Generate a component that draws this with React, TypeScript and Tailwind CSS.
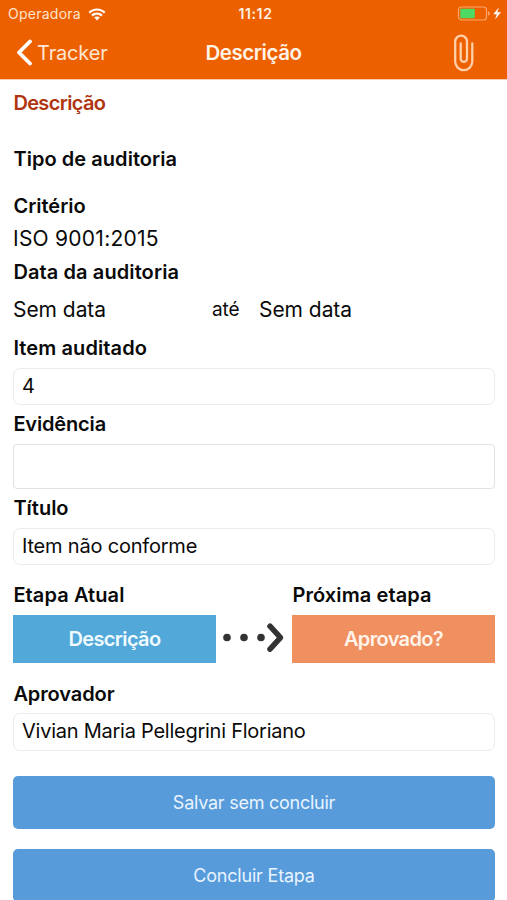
import React from "react";
import clsx from "clsx";

interface TextProps {
  children?: React.ReactNode;
  className?: string;
}

function Label({ children, className }: TextProps) {
  return (
    <div
      className={clsx(
        "h-6 pl-[0.4px] text-[20px] leading-[25px] font-semibold whitespace-nowrap",
        className,
      )}
    >
      {children}
    </div>
  );
}

function Field({ children, className }: TextProps) {
  return (
    <div
      className={clsx(
        "flex items-center border pl-2 text-[20px] whitespace-nowrap",
        className,
      )}
    >
      {children}
    </div>
  );
}

function StatusBar() {
  return (
    <div className="grid h-7 grid-cols-3 items-center text-[14px] leading-7">
      <div className="flex items-center gap-[7px] pl-2 text-[#ffe3cc]">
        <span className="tracking-[0.25px]">Operadora</span>
        <svg width="18" height="13" viewBox="0 0 18 13" fill="#fff">
          <path d="M9 .4C5.700.4 2.700 1.700.5 3.800L2 5.400C3.800 3.700 6.300 2.600 9 2.600s5.200 1.100 7 2.800l1.500-1.600C15.300 1.700 12.300.4 9 .4Z" />
          <path d="M9 4.500c-2.200 0-4.200.9-5.700 2.300l1.500 1.600C5.900 7.300 7.400 6.700 9 6.700s3.100.6 4.200 1.700l1.500-1.600C13.200 5.400 11.200 4.500 9 4.500Z" />
          <path d="M9 8.500c-1.100 0-2.100.4-2.800 1.100L9 12.600l2.800-3C11.100 8.900 10.100 8.500 9 8.500Z" />
        </svg>
      </div>
      <span className="pl-1 text-center font-semibold tracking-[0.6px] text-[#fff1e4]">
        11:12
      </span>
      <svg
        className="mr-1 justify-self-end"
        width="46"
        height="16"
        viewBox="0 0 46 16"
      >
        <rect
          x="1.500"
          y="1"
          width="28"
          height="13"
          rx="3"
          fill="none"
          stroke="#f9a76c"
          strokeWidth="1.200"
        />
        <rect x="3.300" y="2.800" width="14.500" height="9.400" rx="1" fill="#4cd964" />
        <path d="M31 5.300c1.300.4 1.800 1.300 1.800 2.200s-.5 1.800-1.800 2.200Z" fill="#f9a76c" />
        <path d="M42 1.300 36.300 8.300h3.500L38 13.600l6-7.400h-3.700Z" fill="#fff" />
      </svg>
    </div>
  );
}

function NavBar() {
  return (
    <div className="grid h-[51px] grid-cols-[1fr_auto_1fr] items-center">
      <div className="flex items-center gap-1 pb-0.5 pl-4">
        <svg width="17" height="27" viewBox="0 0 17 27">
          <path
            d="M14 2.500 3 13.500l11 11"
            fill="none"
            stroke="#fff"
            strokeWidth="3.800"
            strokeLinecap="round"
            strokeLinejoin="round"
          />
        </svg>
        <span className="text-[20px] leading-7 tracking-[-0.15px] text-[#ffe7d3]">
          Tracker
        </span>
      </div>
      <h1 className="pb-0.5 text-[20.500px] leading-7 font-semibold tracking-[-0.45px] text-[#fff3e8]">
        Descrição
      </h1>
      <svg
        className="mr-[33px] mb-0.5 justify-self-end"
        width="21"
        height="38"
        viewBox="0 0 21 38"
        fill="none"
        stroke="#ffd0a8"
        strokeWidth="2.300"
        strokeLinecap="round"
      >
        <path d="M7.700 9.500v15.200a3.150 3.150 0 0 0 6.300 0V7.600a5.900 5.900 0 0 0-11.800 0v20a8.550 8.550 0 0 0 17.100 0V9.500" />
      </svg>
    </div>
  );
}

function DottedArrow() {
  return (
    <svg width="76" height="48" viewBox="0 0 76 48" fill="#333">
      <circle cx="11" cy="22.500" r="3.800" />
      <circle cx="28" cy="22.500" r="3.800" />
      <circle cx="45" cy="22.500" r="3.800" />
      <path
        d="M54 11.200 64.500 22.700 54 34.200"
        fill="none"
        stroke="#333"
        strokeWidth="5.500"
        strokeLinecap="round"
        strokeLinejoin="round"
      />
    </svg>
  );
}

export default function App() {
  return (
    <div className="flex h-[900px] w-[507px] flex-col overflow-hidden bg-white font-['Inter',sans-serif] text-[#0a0a0a]">
      <header className="h-20 shrink-0 border-b border-[#fbcdb0] bg-[#ed6000]">
        <StatusBar />
        <NavBar />
      </header>

      <main className="flex flex-col pt-[11px] pr-3 pl-[13px]">
        <Label className="tracking-[-0.65px] text-[#b03410]">Descrição</Label>
        <Label className="mt-8 tracking-[0.05px]">Tipo de auditoria</Label>
        <Label className="mt-[23px]">Critério</Label>
        <div className="mt-[9px] h-6 text-[21px] leading-6 tracking-[0.25px]">
          ISO 9001:2015
        </div>
        <Label className="mt-[9px] tracking-[0.1px]">Data da auditoria</Label>

        <div className="mt-3.5 flex h-6 items-center text-[21px] leading-6 tracking-[-0.05px]">
          <span className="w-[199px]">Sem data</span>
          <span className="w-[47px] text-[19px]">até</span>
          <span>Sem data</span>
        </div>

        <Label className="mt-3.5 tracking-[0.1px]">Item auditado</Label>
        <Field className="mt-2 h-[37px] rounded-[7px] border-[#ebebeb] pb-0.5">
          4
        </Field>

        <Label className="mt-[7px] tracking-[-0.15px]">Evidência</Label>
        <Field className="mt-2 h-[45px] rounded-[4px] border-[#e2e2e2]" />

        <Label className="mt-[7px]">Título</Label>
        <Field className="mt-2 h-[37px] rounded-[7px] border-[#ebebeb] pb-0.5 tracking-[-0.2px]">
          Item não conforme
        </Field>

        <div className="mt-[18px] grid grid-cols-[203px_76px_203px]">
          <Label className="tracking-[0.1px]">Etapa Atual</Label>
          <Label className="col-start-3 tracking-[0.1px]">Próxima etapa</Label>
          <div className="mt-2 flex h-12 items-center justify-center bg-[#52a9d9] text-[20px] font-semibold tracking-[-0.65px] text-[#f0faff]">
            Descrição
          </div>
          <div className="mt-2">
            <DottedArrow />
          </div>
          <div className="mt-2 flex h-12 items-center justify-center bg-[#f09060] text-[20px] font-semibold tracking-[-0.65px] text-[#fff3ea]">
            Aprovado?
          </div>
        </div>

        <Label className="mt-[19px] tracking-[-0.1px]">Aprovador</Label>
        <Field className="mt-[7px] h-[38px] rounded-[7px] border-[#ebebeb] pb-0.5 tracking-[-0.25px]">
          Vivian Maria Pellegrini Floriano
        </Field>

        <button className="mt-[25px] h-[53px] shrink-0 rounded-[5px] bg-[#579bdb] text-[18px] tracking-[-0.25px] text-[#e9f4ff]">
          Salvar sem concluir
        </button>
        <button className="mt-5 h-[53px] shrink-0 rounded-[5px] bg-[#579bdb] text-[18px] tracking-[-0.2px] text-[#e9f4ff]">
          Concluir Etapa
        </button>
      </main>
    </div>
  );
}
